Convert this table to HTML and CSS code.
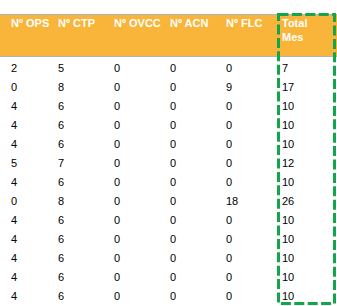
FILE: index.html
```html
<!DOCTYPE html>
<html lang="es">
<head>
<meta charset="utf-8">
<link rel="stylesheet" href="styles.css">
</head>
<body>
<div class="sheet">
  <div class="row head">
    <div class="cell">Nº OPS</div>
    <div class="cell">Nº CTP</div>
    <div class="cell">Nº OVCC</div>
    <div class="cell">Nº ACN</div>
    <div class="cell">Nº FLC</div>
    <div class="cell">Total<br>Mes</div>
  </div>
  <div class="body">
    <div class="row"><div class="cell">2</div><div class="cell">5</div><div class="cell">0</div><div class="cell">0</div><div class="cell">0</div><div class="cell">7</div></div>
    <div class="row"><div class="cell">0</div><div class="cell">8</div><div class="cell">0</div><div class="cell">0</div><div class="cell">9</div><div class="cell">17</div></div>
    <div class="row"><div class="cell">4</div><div class="cell">6</div><div class="cell">0</div><div class="cell">0</div><div class="cell">0</div><div class="cell">10</div></div>
    <div class="row"><div class="cell">4</div><div class="cell">6</div><div class="cell">0</div><div class="cell">0</div><div class="cell">0</div><div class="cell">10</div></div>
    <div class="row"><div class="cell">4</div><div class="cell">6</div><div class="cell">0</div><div class="cell">0</div><div class="cell">0</div><div class="cell">10</div></div>
    <div class="row"><div class="cell">5</div><div class="cell">7</div><div class="cell">0</div><div class="cell">0</div><div class="cell">0</div><div class="cell">12</div></div>
    <div class="row"><div class="cell">4</div><div class="cell">6</div><div class="cell">0</div><div class="cell">0</div><div class="cell">0</div><div class="cell">10</div></div>
    <div class="row"><div class="cell">0</div><div class="cell">8</div><div class="cell">0</div><div class="cell">0</div><div class="cell">18</div><div class="cell">26</div></div>
    <div class="row"><div class="cell">4</div><div class="cell">6</div><div class="cell">0</div><div class="cell">0</div><div class="cell">0</div><div class="cell">10</div></div>
    <div class="row"><div class="cell">4</div><div class="cell">6</div><div class="cell">0</div><div class="cell">0</div><div class="cell">0</div><div class="cell">10</div></div>
    <div class="row"><div class="cell">4</div><div class="cell">6</div><div class="cell">0</div><div class="cell">0</div><div class="cell">0</div><div class="cell">10</div></div>
    <div class="row"><div class="cell">4</div><div class="cell">6</div><div class="cell">0</div><div class="cell">0</div><div class="cell">0</div><div class="cell">10</div></div>
    <div class="row"><div class="cell">4</div><div class="cell">6</div><div class="cell">0</div><div class="cell">0</div><div class="cell">0</div><div class="cell">10</div></div>
  </div>
  <svg class="marquee" width="60" height="293" viewBox="0 0 60 293" aria-hidden="true">
    <rect x="1.5" y="1.5" width="56" height="289" fill="none" stroke="#12a54b" stroke-width="3" stroke-dasharray="10 3.4"/>
  </svg>
</div>
</body>
</html>
```
FILE: styles.css
```css
html, body {
  margin: 0;
  padding: 0;
  background: #ffffff;
}

body {
  font-family: "Liberation Sans", Arial, sans-serif;
  font-size: 11px;
  color: #000000;
  width: 337px;
  height: 306px;
  overflow: hidden;
}

.sheet {
  position: relative;
  margin-top: 14px;
}

.row {
  display: grid;
  grid-template-columns: 47px 56px 56px 56px 56px 1fr;
  height: 19px;
  line-height: 19px;
}

.cell {
  padding-left: 11px;
  white-space: nowrap;
}

.head {
  height: 41px;
  line-height: 14px;
  background: #f9b43a;
  border-top: 1px solid #b3b3b3;
  border-bottom: 1px solid #b3b3b3;
  color: #ffffff;
  font-weight: bold;
}

.head .cell {
  padding-top: 1px;
}

.body {
  padding-top: 2px;
}

.marquee {
  position: absolute;
  left: 277px;
  top: -1px;
}
```
